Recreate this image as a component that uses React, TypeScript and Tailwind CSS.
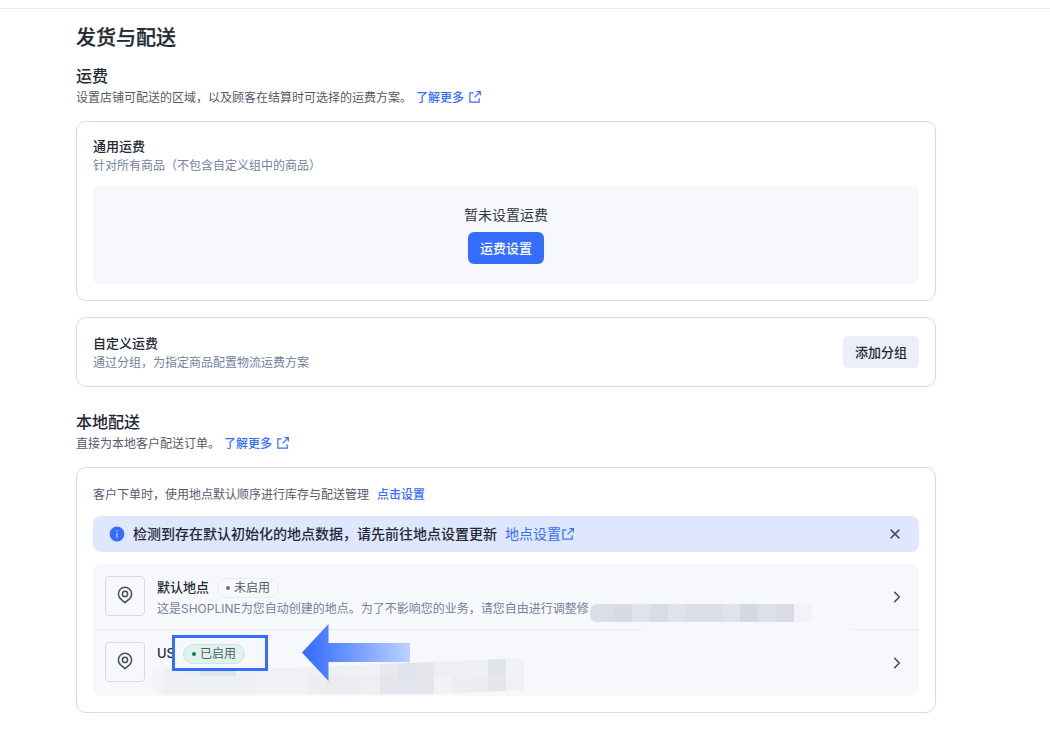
import React from "react";

function ExternalIcon({ className = "" }: { className?: string }) {
  return (
    <svg className={className} width="12" height="12" viewBox="0 0 12 12" fill="none" stroke="currentColor" strokeWidth="1.2">
      <path d="M4.6 1.8H0.9V11.1H10.2V7.2" />
      <path d="M7.4 0.7H11.3V4.6M11.1 0.9L5.6 6.4" />
    </svg>
  );
}

function PinIcon() {
  return (
    <svg className="-mt-0.5" width="16" height="18" viewBox="0 0 16 18" fill="none" stroke="#474f5e" strokeWidth="1.5" strokeLinejoin="round">
      <path d="M8 16.6L3.3 12.6A6.6 6.6 0 1 1 12.7 12.6Z" />
      <circle cx="8" cy="7.9" r="2.6" />
    </svg>
  );
}

function Chevron() {
  return (
    <svg width="8" height="12" viewBox="0 0 8 12" fill="none" stroke="#474f5e" strokeWidth="1.5">
      <path d="M1.3 0.9L6.3 6L1.3 11.1" />
    </svg>
  );
}

const upperBlocks = [
  "bg-[#d9dee7]", "bg-[#d8dbe4]", "bg-[#e0e3ec]", "bg-[#d7dde6]", "bg-[#e0e3ec]", "bg-[#dbdde7]",
  "bg-[#dbdee8]", "bg-[#e0e3ec]", "bg-[#d3d9e2]", "bg-[#dde0e9]", "bg-[#d9dce6]", "bg-[#f1f3f8]",
];

const lowerBlocks = [
  ["#f3f4f7", "#f2f3f6"], ["#eff0f4", "#eff0f3"], ["#eceff2", "#eff0f4"], ["#dee5e9", "#eff0f4"],
  ["#dee5e9", "#eff0f4"], ["#eff1f4", "#eff0f4"], ["#f0f1f5", "#f0f1f5"], ["#f0f1f5", "#f0f1f5"],
  ["#f0f1f5", "#f0f1f5"], ["#eff0f4", "#edeef2"], ["#eeeff3", "#ebecf1"], ["#eff0f4", "#ecedf2"],
  ["#f0f1f5", "#eeeff3"], ["#e6e8ed", "#e4e6eb"], ["#e0e4ec", "#e2e5ec"], ["#e5e7ed", "#e4e6ec"],
  ["#eeeff4", "#f1f2f6"], ["#edeff3", "#edeef2"], ["#eff0f5", "#ecedf2"], ["#e0e4ec", "#e4e6eb"],
  ["#f1f2f6", "#f0f1f5"],
];

export default function App() {
  return (
    <div className="relative h-[732px] w-[1050px] overflow-hidden bg-white font-['Inter','Noto_Sans_CJK_SC',sans-serif] text-[#242833]">
      <div className="h-[9px] border-b border-[#ebecf0]" />
      <main className="ml-[76px] w-[860px] pt-[15px]">
        <h1 className="text-[20px] leading-7 font-medium [-webkit-text-stroke:0.25px_#242833]">发货与配送</h1>

        <section className="mt-3">
          <h2 className="text-[16px] leading-6 font-medium">运费</h2>
          <p className="flex h-5 items-center text-[12px] leading-5 text-[#535b6b]">
            设置店铺可配送的区域，以及顾客在结算时可选择的运费方案。
            <a className="ml-1 flex items-center font-medium text-[#356dff]">
              了解更多
              <ExternalIcon className="-mt-0.5 ml-[5px]" />
            </a>
          </p>
          <div className="mt-[13px] h-[180px] rounded-[10px] border border-[#d7dae8] px-4 pt-[14px]">
            <h3 className="text-[13px] leading-5 font-medium">通用运费</h3>
            <p className="pt-px text-[12px] leading-[18px] text-[#7481a0]">针对所有商品（不包含自定义组中的商品）</p>
            <div className="mt-[11px] flex h-[98px] flex-col items-center rounded-md bg-[#f7f8fc] pt-[18px]">
              <p className="text-[14px] leading-[22px] text-[#333845]">暂未设置运费</p>
              <button className="mt-1.5 h-8 w-[76px] rounded-md bg-[#356dff] pt-px text-[13px] font-medium text-white">运费设置</button>
            </div>
          </div>
          <div className="mt-4 flex h-[70px] items-center justify-between rounded-[10px] border border-[#d7dae8] px-4">
            <div>
              <h3 className="text-[13px] leading-5 font-medium">自定义运费</h3>
              <p className="text-[12px] leading-[19px] text-[#7481a0]">通过分组，为指定商品配置物流运费方案</p>
            </div>
            <button className="h-8 w-[76px] rounded-md bg-[#eceef8] pt-px text-[13px] font-medium">添加分组</button>
          </div>
        </section>

        <section className="mt-[23px]">
          <h2 className="text-[16px] leading-6 font-medium">本地配送</h2>
          <p className="flex h-5 items-center text-[12px] leading-5 text-[#535b6b]">
            直接为本地客户配送订单。
            <a className="ml-1 flex items-center font-medium text-[#356dff]">
              了解更多
              <ExternalIcon className="-mt-0.5 ml-[5px]" />
            </a>
          </p>
          <div className="mt-[13px] h-[246px] rounded-[10px] border border-[#d7dae8] px-4 pt-[17px]">
            <p className="text-[12px] leading-5 text-[#535b6b]">
              客户下单时，使用地点默认顺序进行库存与配送管理
              <a className="ml-2 font-medium text-[#356dff]">点击设置</a>
            </p>
            <div className="mt-[11px] flex h-9 items-center rounded-lg bg-[#dfe7ff] pl-4 text-[14px]">
              <svg width="16" height="16" viewBox="0 0 16 16">
                <circle cx="8" cy="8" r="7.4" fill="#356dff" />
                <path d="M8 7V11.8M8 4.2V5.8" stroke="#b7caff" strokeWidth="1.3" />
              </svg>
              <span className="-mt-0.5 ml-2 font-medium">检测到存在默认初始化的地点数据，请先前往地点设置更新</span>
              <a className="-mt-0.5 ml-2 flex items-center text-[#356dff]">
                地点设置
                <ExternalIcon className="mt-0.5 ml-px" />
              </a>
              <svg className="mr-[19px] ml-auto" width="10" height="10" viewBox="0 0 10 10" stroke="#474f5e" strokeWidth="1.5">
                <path d="M0.6 0.6L9.4 9.4M9.4 0.6L0.6 9.4" />
              </svg>
            </div>
            <div className="mt-3 h-[132px] rounded-lg bg-[#f7f8fc]">
              <div className="flex h-[66px] border-b border-[#eaecf1] pt-3 pl-3">
                <div className="flex h-10 w-10 items-center justify-center rounded border border-[#d7dae8]"><PinIcon /></div>
                <div className="ml-3">
                  <div className="flex h-[23px] items-center">
                    <span className="text-[13px] font-medium">默认地点</span>
                    <span className="ml-2 flex h-5 w-[62px] items-center justify-center rounded-full border border-[#eaecf2] text-[12px] text-[#535b6b]">
                      <i className="mr-1 h-1 w-1 rounded-full bg-[#66728c]" />未启用
                    </span>
                  </div>
                  <p className="text-[12px] leading-5 whitespace-nowrap text-[#7481a0]">这是SHOPLINE为您自动创建的地点。为了不影响您的业务，请您自由进行调整修</p>
                </div>
                <div className="mr-[18px] ml-auto pt-[15px]"><Chevron /></div>
              </div>
              <div className="flex h-[66px] pt-3 pl-3">
                <div className="flex h-10 w-10 items-center justify-center rounded border border-[#d7dae8]"><PinIcon /></div>
                <div className="ml-3 flex h-[23px] items-center">
                  <span className="w-[17px] text-[13px] font-medium">US</span>
                  <span className="ml-[9px] flex h-5 w-[62px] items-center justify-center rounded-full border border-[#c9e9df] bg-[#e0f2ec] text-[12px] text-[#535b6b]">
                    <i className="mr-1 h-1 w-1 rounded-full bg-[#078552]" />已启用
                  </span>
                </div>
                <div className="mr-[18px] ml-auto pt-[15px]"><Chevron /></div>
              </div>
            </div>
          </div>
        </section>
      </main>

      <div className="absolute top-[629px] left-[641px] h-px w-[211px] bg-[#f5f6fa]" />
      <div className="absolute top-[604px] left-[590px] flex h-[18px] overflow-hidden rounded-l-[7px]">
        {upperBlocks.map((c, i) => (
          <div key={i} className={(i === 0 ? "w-6 " : "w-[18px] ") + c} />
        ))}
      </div>
      <svg className="absolute top-[656px] left-[146px]" width="380" height="40" viewBox="0 0 380 40">
        <defs>
          <clipPath id="smudge">
            <path d="M5 26Q5 12 18 12L140 12L190 10L378 2V34L290 38H18Q5 38 5 26Z" />
          </clipPath>
        </defs>
        <g clipPath="url(#smudge)" shapeRendering="crispEdges">
          {lowerBlocks.map(([a, b], i) => (
            <g key={i}>
              <rect x={i * 18} y="2" width="18" height="18" fill={a} />
              <rect x={i * 18} y="20" width="18" height="18" fill={b} />
            </g>
          ))}
        </g>
      </svg>
      <div className="absolute top-[635px] left-[172px] h-9 w-24 border-3 border-[#356dff]" />
      <svg className="absolute top-[624px] left-[302px]" width="109" height="58" viewBox="0 0 109 58">
        <defs>
          <linearGradient id="arrow" x1="0" x2="1">
            <stop offset="0" stopColor="#2f69ff" />
            <stop offset="1" stopColor="#bcd2ff" />
          </linearGradient>
        </defs>
        <path d="M0 28.5L26.5 0V19H108V38H26.5V57Z" fill="url(#arrow)" />
      </svg>
    </div>
  );
}
